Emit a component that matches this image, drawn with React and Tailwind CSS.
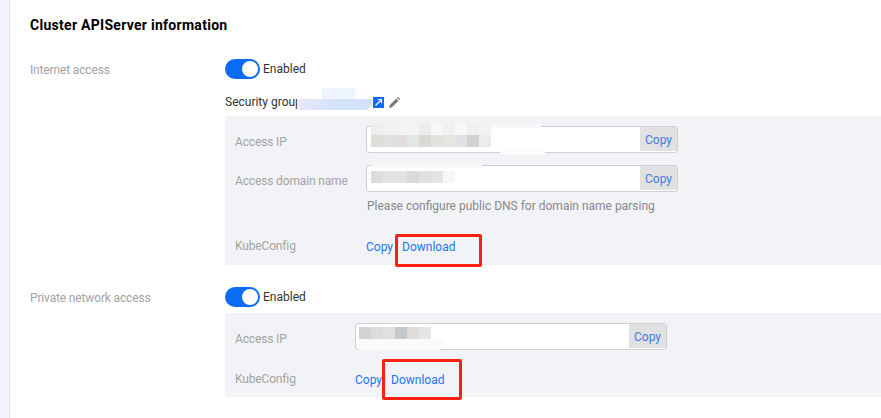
import React from 'react';

function Toggle() {
  return (
    <div className="flex items-center gap-[3px]">
      <span className="flex h-5 w-[35px] items-center justify-end rounded-full bg-[#0a6cf5] pr-[2px]">
        <span className="h-[16px] w-[16px] rounded-full bg-white" />
      </span>
      <span className="text-xs text-[#333]">Enabled</span>
    </div>
  );
}

// pixelated redaction blocks
function Mosaic({ colors }) {
  return (
    <div className="flex">
      {colors.map((c, i) => (
        <span key={i} className="h-[12px] w-[12px]" style={{ background: c }} />
      ))}
    </div>
  );
}

function CopyInput({ colors, offset }) {
  return (
    <div className="flex h-[27px] w-[312px] rounded-[3px] border border-[#cfd0d4] bg-white">
      <div className={`flex-1 ${offset}`}>
        <Mosaic colors={colors} />
      </div>
      <span className="mb-[1px] flex w-[37px] items-center justify-center bg-[#e1e1e1] pt-[2px] text-xs text-[#3d7ee0]">Copy</span>
    </div>
  );
}

function Label({ children }) {
  return <span className="text-xs tracking-[-0.15px] text-[#a3a3a3]">{children}</span>;
}

function KubeConfig({ width }) {
  return (
    <div className="flex items-start text-xs leading-[16px]">
      <div className={width}><Label>KubeConfig</Label></div>
      <div className="flex pt-[1px] text-[#1a76f0]">
        <span>Copy</span>
        <span className="ml-[9px]">Download</span>
      </div>
    </div>
  );
}

export default function App() {
  return (
    <div className="flex h-[418px] w-[881px] overflow-hidden bg-white font-['Roboto',sans-serif]">
      <div className="h-full w-[10px] border-r border-[#e4e5ea] bg-[#f2f3f8]" />
      <div className="relative flex-1 pl-[20px]">
        <h2 className="pt-[17px] text-sm leading-[17px] font-bold tracking-[0.28px] text-black">Cluster APIServer information</h2>

        <div className="mt-[25px] flex">
          <div className="w-[195px] pt-[1px] leading-[18px]"><Label>Internet access</Label></div>
          <div className="flex-1">
            <Toggle />
            <div className="mt-[14px] flex h-[18px] items-center text-xs text-[#333]">
              <span>Security group</span>
              <span className="ml-[71px] flex h-[11px] w-[11px] items-center justify-center bg-[#0a6cf5]">
                <svg width="9" height="9" viewBox="0 0 9 9" fill="none" stroke="white" strokeWidth="1.2">
                  <path d="M1.5 7.5L7 2M3.8 1.5h3.7v3.7" />
                </svg>
              </span>
              <svg width="13" height="13" viewBox="0 0 13 13" fill="#7a7a7a" className="ml-[4px]">
                <path d="M1 12l.8-3L8.3 2.5l2.2 2.2L4 11.2zM9.1 1.7l.9-.9 2.2 2.2-.9.9z" />
              </svg>
            </div>
            <div className="mt-[5px] flex h-[149px] flex-col bg-[#f2f3f7] pl-[10px]">
              <div className="mt-[10px] flex items-center">
                <div className="w-[131px] pt-[2px]"><Label>Access IP</Label></div>
                <CopyInput
                  offset="pt-[8px] pl-[4px]"
                  colors={['#e0dcda', '#e0e1de', '#e1dedd', '#e4e5e5', '#d8d9d3', '#e2e2e1', '#e6e5df', '#e2e2e3', '#d2d3cf', '#ececeb']}
                />
              </div>
              <div className="mt-[12px] flex items-center">
                <div className="w-[131px] pt-[2px]"><Label>Access domain name</Label></div>
                <CopyInput
                  offset="pt-[5px] pl-[4px]"
                  colors={['#dedcdb', '#e3e4e2', '#e4e2e1', '#d9d9da', '#e2dfe1', '#e6e3e1', '#f4f8fb']}
                />
              </div>
              <p className="mt-[7px] ml-[132px] text-xs leading-[14px] text-[#888]">Please configure public DNS for domain name parsing</p>
              <div className="mt-[25px]">
                <KubeConfig width="w-[131px]" />
              </div>
            </div>
          </div>
        </div>

        <div className="mt-[22px] flex">
          <div className="w-[195px] pt-[1px] leading-[18px]"><Label>Private network access</Label></div>
          <div className="flex-1">
            <Toggle />
            <div className="mt-[6px] flex h-[84px] flex-col bg-[#f2f3f7] pl-[10px]">
              <div className="mt-[10px] flex items-center">
                <div className="w-[120px] pt-[2px]"><Label>Access IP</Label></div>
                <CopyInput
                  offset="pt-[3px] pl-[3px]"
                  colors={['#d4d3d1', '#dcdbd9', '#e1e0de', '#c5c7c9', '#dedbd9', '#e3e6e7']}
                />
              </div>
              <div className="mt-[21px]">
                <KubeConfig width="w-[120px]" />
              </div>
            </div>
          </div>
        </div>

        {/* redaction smears over the screenshot */}
        <div className="absolute top-[88px] left-[312px] h-[11px] w-[33px] bg-[#eef4fe]" />
        <div className="absolute top-[99px] left-[287px] h-[11px] w-[75px] rounded-br-[8px] bg-gradient-to-r from-[#e8eaf4] via-[#d4e1fb] to-[#d4e1fb]" />
        <div className="absolute top-[123px] left-[361px] flex">
          <Mosaic colors={['#f0eeed', '#f2f1ef', '#f4f3f1', '#f4f3f1', '#ebedea', '#f6f6f5', '#eff1ee', '#f8f8f8', '#f2f0ef', '#f2f2f0']} />
        </div>
        <div className="absolute top-[124px] left-[481px] h-[4px] w-[50px] rounded-r-full bg-[#f8f8f9]" />
        <div className="absolute top-[150px] left-[490px] h-[5px] w-[45px] rounded-r-full bg-[#fbfbfb]" />
        <div className="absolute top-[163px] left-[362px] h-[5px] w-[110px] rounded-r-full bg-[#f7f7f8]" />
        <div className="absolute top-[339px] left-[349px] h-[12px] w-[86px] rounded-br-[10px] bg-[#fafafa]" />

        {/* red annotation boxes */}
        <div className="absolute top-[234px] left-[385px] h-[33px] w-[87px] rounded-[2px] border-[3px] border-[#fa2013]" />
        <div className="absolute top-[359px] left-[372px] h-[41px] w-[80px] rounded-[2px] border-[3px] border-[#fa2013]" />
      </div>
    </div>
  );
}
